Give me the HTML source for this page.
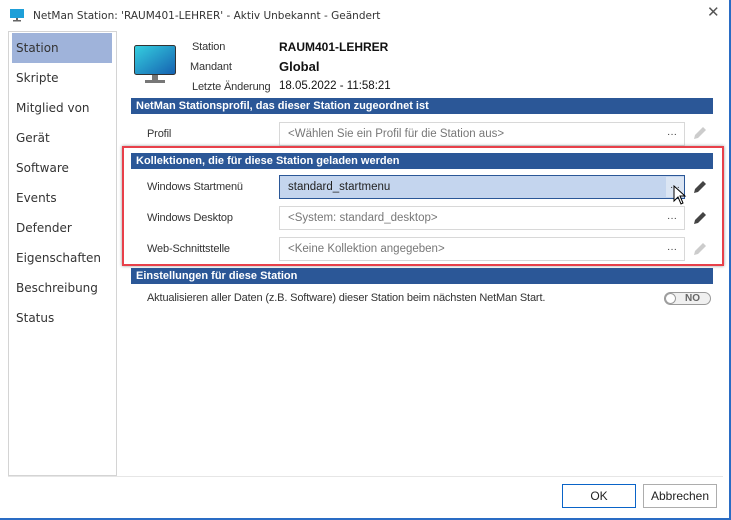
<!DOCTYPE html>
<html><head><meta charset="utf-8"><style>
*{margin:0;padding:0;box-sizing:border-box}
body{width:731px;height:520px;overflow:hidden;background:#fff;font-family:"Liberation Sans",sans-serif;position:relative;color:#222}
.a{position:absolute}
.win{left:0;top:0;width:731px;height:520px;border-right:2px solid #2a6cc4;border-bottom:2px solid #2a6cc4}
.side{left:8px;top:31px;width:109px;height:445px;border:1px solid #d4d4d4}
.it{left:16px;color:#333;font-family:"DejaVu Sans",sans-serif;font-size:12px}
.bar{left:131px;width:582px;height:16px;background:#2b5797;color:#fff;font-weight:bold;padding:0 0 0 5px;font-family:"Liberation Sans",sans-serif;font-size:11px;line-height:16px}
.lbl{font-size:11px;color:#333;letter-spacing:-0.15px}
.fld{left:279px;width:406px;height:24px;border:1px solid #d8d8d8;font-size:11.5px;color:#777;padding:5px 0 0 8px}
.dots{position:absolute;right:7px;top:6px;color:#333;font-size:10px}
.btn{top:484px;height:24px;font-size:12px;text-align:center;line-height:22px}
</style></head><body>
<div class="a win"></div>
<svg class="a" style="left:10px;top:9px" width="16" height="14"><rect x="0" y="0" width="14" height="9" fill="#1e9fd8"/><rect x="6" y="9" width="2" height="2" fill="#666"/><rect x="3" y="11" width="8" height="1.5" fill="#666"/></svg>
<div class="a" style="left:33px;top:10px;color:#333;font-family:'DejaVu Sans',sans-serif;font-size:10.5px">NetMan Station: 'RAUM401-LEHRER' - Aktiv Unbekannt - Geändert</div>
<div class="a" style="left:707px;top:3px;font-size:15px;color:#555">✕</div>
<div class="a side"></div>
<div class="a" style="left:12px;top:33px;width:100px;height:30px;background:#9fb3da"></div>
<div class="a it" style="top:41px">Station</div>
<div class="a it" style="top:71px">Skripte</div>
<div class="a it" style="top:101px">Mitglied von</div>
<div class="a it" style="top:131px">Gerät</div>
<div class="a it" style="top:161px">Software</div>
<div class="a it" style="top:191px">Events</div>
<div class="a it" style="top:221px">Defender</div>
<div class="a it" style="top:251px">Eigenschaften</div>
<div class="a it" style="top:281px">Beschreibung</div>
<div class="a it" style="top:311px">Status</div>
<svg class="a" style="left:134px;top:45px" width="44" height="39"><defs><linearGradient id="g" x1="0" y1="0" x2="1" y2="1"><stop offset="0" stop-color="#35d0e0"/><stop offset="1" stop-color="#1560b0"/></linearGradient></defs><rect x="0.5" y="0.5" width="41" height="29" rx="2" fill="url(#g)" stroke="#333"/><rect x="18" y="30" width="6" height="5" fill="#777"/><rect x="11" y="35" width="20" height="3" fill="#777"/></svg>
<div class="a lbl" style="left:192px;top:41px">Station</div>
<div class="a lbl" style="left:190px;top:61px">Mandant</div>
<div class="a lbl" style="left:192px;top:81px">Letzte Änderung</div>
<div class="a" style="left:279px;top:40px;font-size:12px;font-weight:bold;color:#111">RAUM401-LEHRER</div>
<div class="a" style="left:279px;top:59px;font-size:13px;font-weight:bold;color:#111">Global</div>
<div class="a" style="left:279px;top:80px;font-size:11.5px;color:#111">18.05.2022 - 11:58:21</div>
<div class="a bar" style="top:98px">NetMan Stationsprofil, das dieser Station zugeordnet ist</div>
<div class="a lbl" style="left:147px;top:128px">Profil</div>
<div class="a fld" style="top:122px">&lt;Wählen Sie ein Profil für die Station aus&gt;<span class="dots">···</span></div>
<div class="a" style="left:122px;top:146px;width:602px;height:120px;border:2px solid #e8404a;box-shadow:0 0 3px #999"></div>
<div class="a bar" style="top:153px">Kollektionen, die für diese Station geladen werden</div>
<div class="a lbl" style="left:147px;top:181px">Windows Startmenü</div>
<div class="a fld" style="top:175px;border-color:#2b5797;background:#c4d5ee;color:#222">standard_startmenu<span class="dots" style="top:1px;right:0;width:18px;height:20px;background:#dbe5f3;text-align:center;padding-top:5px">···</span></div>
<svg class="a" style="left:673px;top:185px" width="14" height="21"><path d="M1 1 L1 16 L5 12 L8 19 L10 18 L7 11 L12 11 Z" fill="#fff" stroke="#000"/></svg>
<div class="a lbl" style="left:147px;top:212px">Windows Desktop</div>
<div class="a fld" style="top:206px">&lt;System: standard_desktop&gt;<span class="dots">···</span></div>
<div class="a lbl" style="left:147px;top:243px">Web-Schnittstelle</div>
<div class="a fld" style="top:237px">&lt;Keine Kollektion angegeben&gt;<span class="dots">···</span></div>
<svg class="a" style="left:692px;top:125px" width="16" height="16"><path d="M2 14 L3 10 L11 2 L14 5 L6 13 Z" fill="#ccc"/></svg>
<svg class="a" style="left:692px;top:179px" width="16" height="16"><path d="M2 14 L3 10 L11 2 L14 5 L6 13 Z" fill="#444"/></svg>
<svg class="a" style="left:692px;top:210px" width="16" height="16"><path d="M2 14 L3 10 L11 2 L14 5 L6 13 Z" fill="#444"/></svg>
<svg class="a" style="left:692px;top:241px" width="16" height="16"><path d="M2 14 L3 10 L11 2 L14 5 L6 13 Z" fill="#ccc"/></svg>
<div class="a bar" style="top:268px">Einstellungen für diese Station</div>
<div class="a lbl" style="left:147px;top:292px">Aktualisieren aller Daten (z.B. Software) dieser Station beim nächsten NetMan Start.</div>
<div class="a" style="left:664px;top:292px;width:47px;height:13px;border:1px solid #999;border-radius:7px;background:#f0f0f0;font-size:10px;font-weight:bold;color:#666;padding-left:20px;line-height:11px">NO</div>
<div class="a" style="left:665px;top:293px;width:11px;height:11px;border-radius:50%;background:#fff;border:1px solid #999"></div>
<div class="a" style="left:8px;top:476px;width:715px;height:1px;background:#e6e6e6"></div>
<div class="a btn" style="left:562px;width:74px;border:1px solid #0a64c8">OK</div>
<div class="a btn" style="left:643px;width:74px;border:1px solid #adadad">Abbrechen</div>
</body></html>
